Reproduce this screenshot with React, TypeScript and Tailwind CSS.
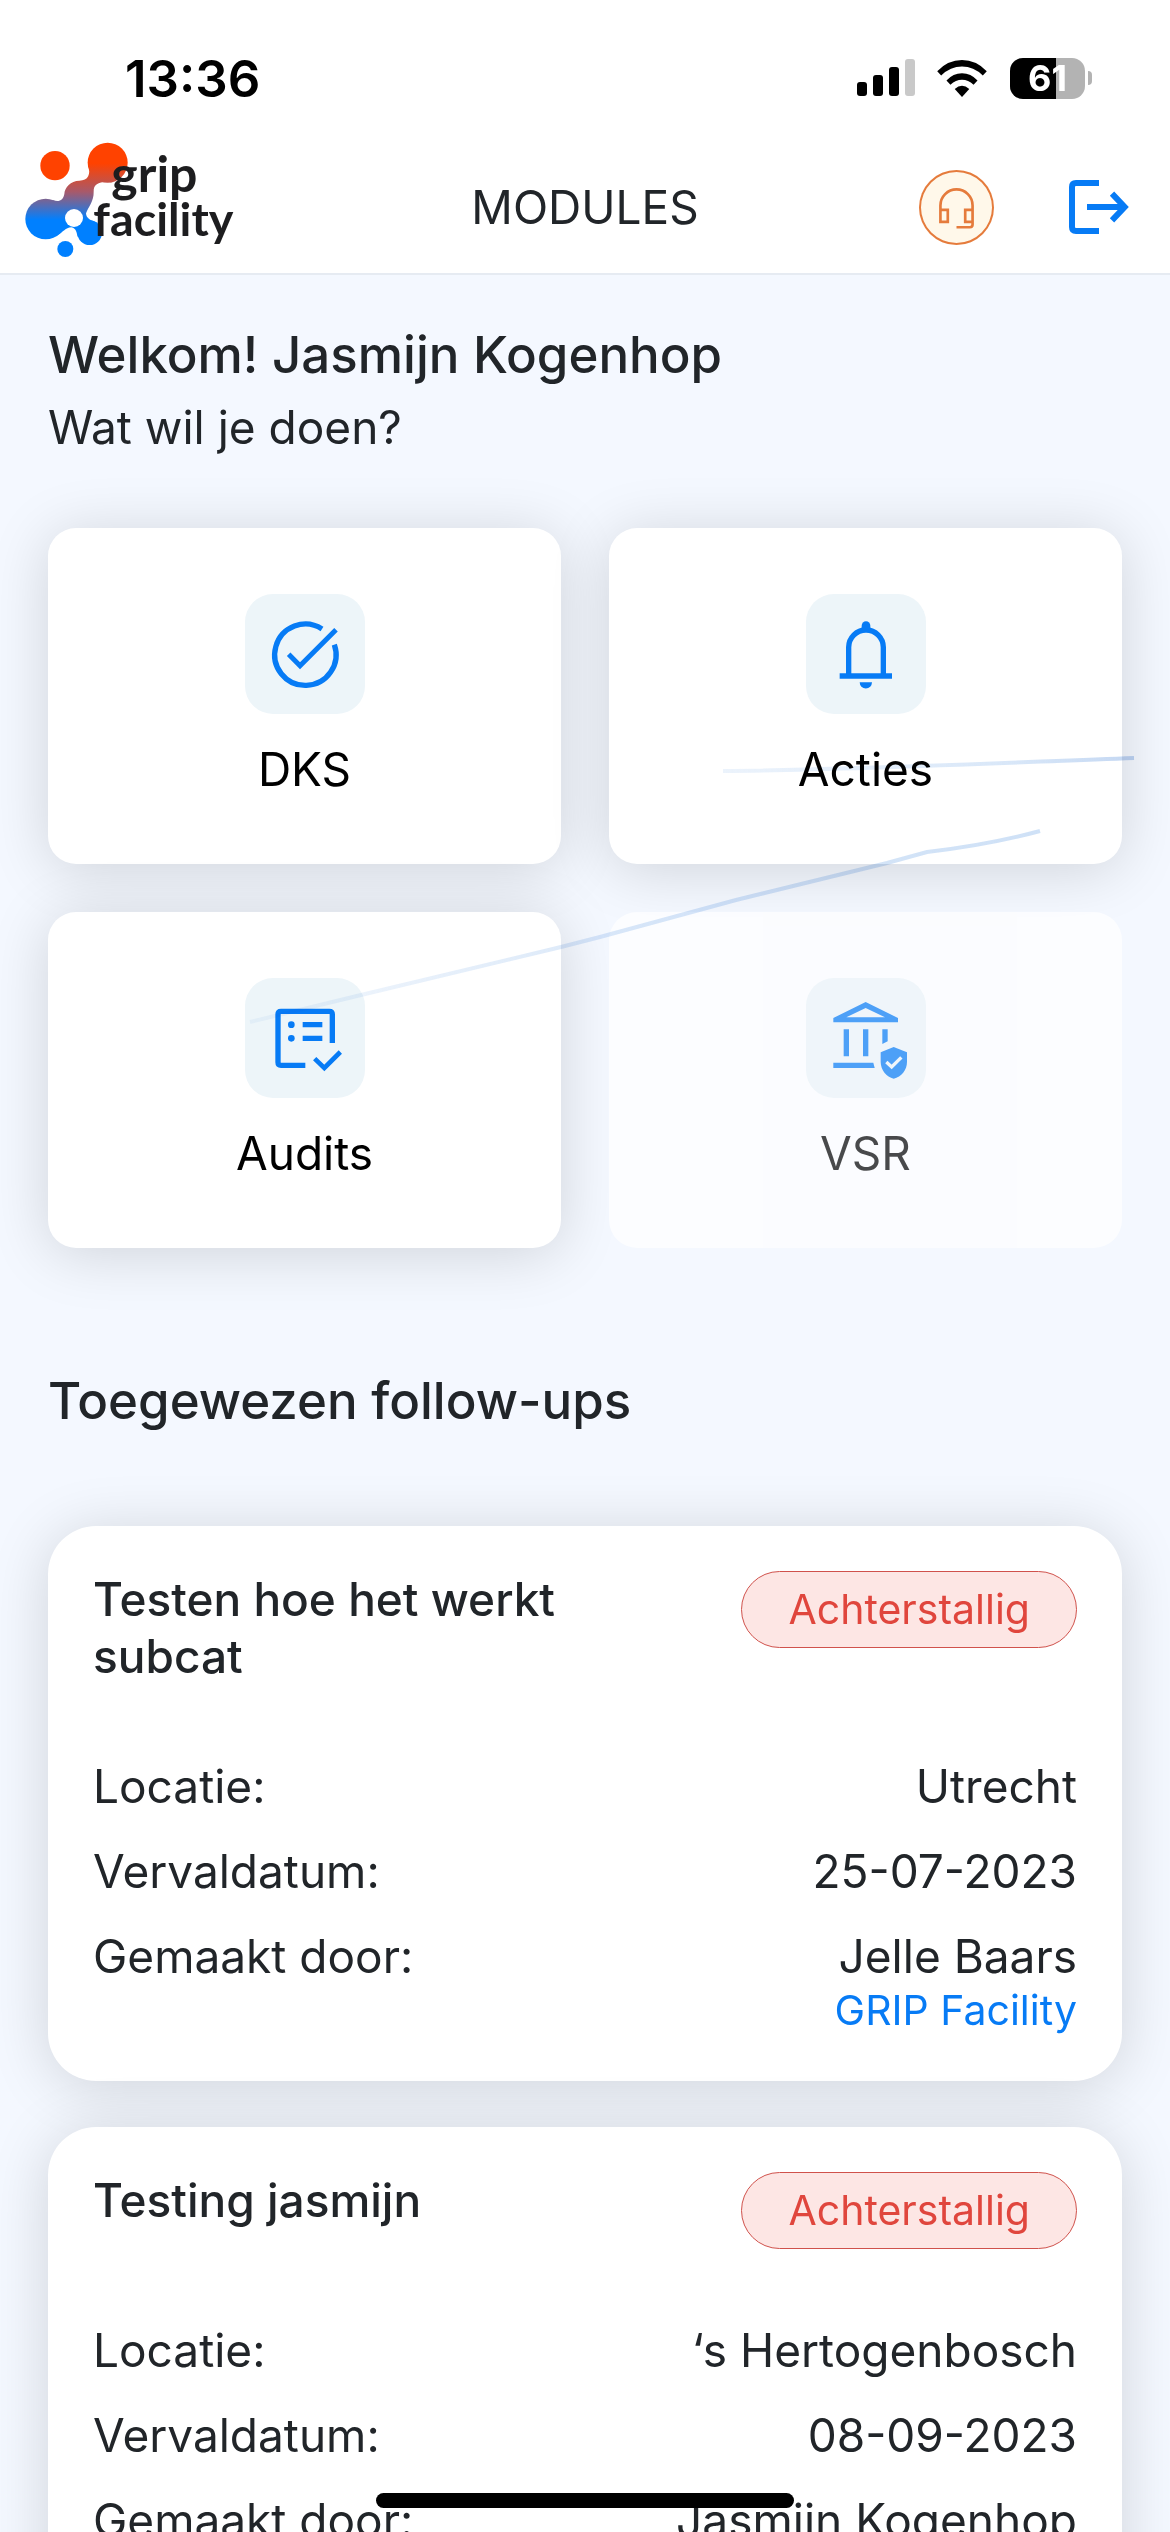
import type { ReactNode } from 'react';
import clsx from 'clsx';

interface Module {
  id: string;
  label: string;
  icon: ReactNode;
  disabled?: boolean;
}

interface FollowUp {
  title: string;
  status: string;
  location: string;
  dueDate: string;
  createdBy: string;
  company: string;
}

const modules: Module[] = [
  { id: 'dks', label: 'DKS', icon: <CheckCircleIcon /> },
  { id: 'acties', label: 'Acties', icon: <BellIcon /> },
  { id: 'audits', label: 'Audits', icon: <AuditIcon /> },
  { id: 'vsr', label: 'VSR', icon: <BankIcon />, disabled: true },
];

const followUps: FollowUp[] = [
  {
    title: 'Testen hoe het werkt subcat',
    status: 'Achterstallig',
    location: 'Utrecht',
    dueDate: '25-07-2023',
    createdBy: 'Jelle Baars',
    company: 'GRIP Facility',
  },
  {
    title: 'Testing jasmijn',
    status: 'Achterstallig',
    location: '‘s Hertogenbosch',
    dueDate: '08-09-2023',
    createdBy: 'Jasmijn Kogenhop',
    company: 'GRIP Facility',
  },
];

function CheckCircleIcon() {
  return (
    <svg viewBox="0 0 360 360" className="size-full" fill="none" stroke="currentColor" aria-hidden="true">
      <path d="M231 105A92 92 0 1 0 268 152" strokeWidth="16" />
      <path d="M131 181L165 215L273 107" strokeWidth="15" />
    </svg>
  );
}

function BellIcon() {
  return (
    <svg viewBox="0 0 360 360" className="size-full" fill="none" stroke="currentColor" aria-hidden="true">
      <path d="M128 246V160A52 52 0 0 1 232 160V246" strokeWidth="16" />
      <path d="M101 246H258" strokeWidth="16" />
      <path d="M167 106V95A13 13 0 0 1 193 95V106Z" fill="currentColor" stroke="none" />
      <path d="M161 265H198A18.500 18.500 0 0 1 161 265Z" fill="currentColor" stroke="none" />
    </svg>
  );
}

function AuditIcon() {
  return (
    <svg viewBox="0 0 360 360" className="size-full" fill="none" stroke="currentColor" aria-hidden="true">
      <path d="M262 195V109Q262 100 253 100H108Q99 100 99 109V253Q99 262 108 262H181" strokeWidth="16" />
      <path d="M173 140H232M173 181H232" strokeWidth="16" />
      <circle cx="139" cy="140" r="10" fill="currentColor" stroke="none" />
      <circle cx="139" cy="181" r="10" fill="currentColor" stroke="none" />
      <path d="M209 242L238 270L286 222" strokeWidth="14" />
    </svg>
  );
}

function BankIcon() {
  return (
    <svg viewBox="0 0 360 360" className="size-full" fill="currentColor" aria-hidden="true">
      <path fillRule="evenodd" d="M179 72L276 120V133H82V120ZM179 90L121 118H237Z" />
      <path d="M113 154H129V235H113ZM171 154H187V235H171ZM229 154H245V190L229 198Z" />
      <path d="M82 254H202L206 270H82Z" />
      <path d="M263 207L303 223V251C303 276 286 296 263 302C241 296 224 276 224 251V223Z" />
      <path d="M241 252L257 267L286 238" fill="none" stroke="#edf5f9" strokeWidth="10" />
    </svg>
  );
}

function HeadsetIcon() {
  return (
    <svg viewBox="294 420 224 224" className="size-full" fill="none" stroke="currentColor" strokeWidth="8" aria-hidden="true">
      <path d="M380 575V539H358V575ZM358 545V526A48 48 0 0 1 454 526V583Q454 591 446 591H406" />
      <path d="M454 539H432V575H454" />
    </svg>
  );
}

function LogoutIcon() {
  return (
    <svg viewBox="744 450 180 162" className="h-[54px] w-[60px]" fill="none" stroke="currentColor" strokeWidth="18" aria-hidden="true">
      <path d="M834 459H765Q753 459 753 471V591Q753 603 765 603H834" />
      <path d="M798 531H910M873 491L911 531L873 571" />
    </svg>
  );
}

function Logo() {
  return (
    <svg viewBox="75 63 639 396" className="h-[132px] w-[213px]" role="img" aria-label="grip facility">
      <defs>
        <linearGradient id="logo-blend" gradientUnits="userSpaceOnUse" x1="0" y1="130" x2="0" y2="300">
          <stop offset="0" stopColor="#ff4200" />
          <stop offset="0.5" stopColor="#a8596a" />
          <stop offset="1" stopColor="#0080ff" />
        </linearGradient>
      </defs>
      <g fill="url(#logo-blend)">
        <circle cx="165" cy="137" r="44" fill="#ff4200" />
        <circle cx="323" cy="128" r="60" />
        <circle cx="137" cy="297" r="61" />
        <circle cx="269" cy="338" r="37" />
        <circle cx="196" cy="387" r="24" />
        <path d="M264 130C274 165 264 182 238 182C212 182 194 202 193 222C190 240 178 247 160 241L120 300L172 346C190 336 196 323 214 322C230 324 230 342 234 352L290 308C275 302 258 296 258 280C264 262 282 244 281 215C280 190 300 184 335 187Z" />
      </g>
      <circle cx="222" cy="294" r="27" fill="#fff" />
      <g fill="#1d1d1f" className="font-['Lato',sans-serif] font-bold">
        <text x="334" y="215" fontSize="150">grip</text>
        <text x="280" y="348" fontSize="140">facility</text>
      </g>
    </svg>
  );
}

function StatusBar() {
  return (
    <div className="flex h-[141px] items-center justify-between bg-white pt-[15px] pr-[78px] pl-[125px]">
      <span className="text-[51px] leading-none font-semibold text-black">13:36</span>
      <div className="flex items-center">
        <svg viewBox="0 0 58 38" className="h-[38px] w-[58px]" aria-hidden="true">
          <rect x="0" y="23" width="10" height="14" rx="3" />
          <rect x="16" y="16" width="10" height="21" rx="3" />
          <rect x="32" y="8" width="10" height="29" rx="3" />
          <rect x="48" y="0" width="10" height="37" rx="3" fill="#c9c9c9" />
        </svg>
        <svg viewBox="0 0 150 112" className="ml-[22px] h-[37px] w-[50px]" aria-hidden="true">
          <path d="M0 34Q32 0 75 0T150 34L138 47Q110 20 75 20T12 47Z" />
          <path d="M28 62Q48 40 75 40T122 62L110 75Q94 60 75 60T40 75Z" />
          <path d="M53 88Q75 68 97 88L75 112Z" />
        </svg>
        <div className="relative ml-[23px] flex h-[41px] w-[75px] items-center justify-center overflow-hidden rounded-[13px] bg-[#b3b3b3]">
          <div className="absolute inset-y-0 left-0 w-[46px] bg-black" />
          <span className="relative text-[36px] leading-none font-bold text-white">61</span>
        </div>
        <div className="ml-[3px] h-[14px] w-1 rounded-r-full bg-[#b3b3b3]" />
      </div>
    </div>
  );
}

function Header() {
  return (
    <header className="grid grid-cols-[1fr_auto_1fr] items-center border-b-2 border-[#e6ebf2] bg-white px-[25px]">
      <Logo />
      <div className="text-[46px] leading-[57px] text-[#212529]">MODULES</div>
      <div className="flex items-center justify-end gap-[75px] pr-4">
        <button
          type="button"
          aria-label="Helpdesk"
          className="size-[75px] rounded-full bg-[#fff8ea] text-[#e57b3c] ring-2 ring-[#e57b3c] ring-inset"
        >
          <HeadsetIcon />
        </button>
        <button type="button" aria-label="Uitloggen" className="text-[#077bf5]">
          <LogoutIcon />
        </button>
      </div>
    </header>
  );
}

function ModuleCard({ label, icon, disabled = false }: Omit<Module, 'id'>) {
  return (
    <button
      type="button"
      disabled={disabled}
      className={clsx(
        'flex flex-col items-center gap-[27px] rounded-[28px] bg-white py-[66px] text-black',
        disabled ? 'opacity-70' : 'shadow-[0_6px_60px_rgba(0,0,0,0.15)]',
      )}
    >
      <span className="size-[120px] rounded-[28px] bg-[#edf5f9] text-[#077bf5]">{icon}</span>
      <span className="text-[46px] leading-[57px]">{label}</span>
    </button>
  );
}

/* Two loose pen strokes drawn over the tiles */
function PenStrokes() {
  return (
    <svg
      viewBox="0 0 1074 720"
      className="pointer-events-none absolute inset-0 size-full overflow-visible mix-blend-multiply"
      fill="none"
      strokeWidth="4"
      aria-hidden="true"
    >
      <defs>
        <linearGradient id="pen-top" gradientUnits="userSpaceOnUse" x1="675" y1="0" x2="1086" y2="0">
          <stop offset="0" stopColor="#9fc3ee" stopOpacity="0.2" />
          <stop offset="0.7" stopColor="#9fc3ee" stopOpacity="0.4" />
          <stop offset="1" stopColor="#9dbdea" stopOpacity="0.6" />
        </linearGradient>
        <linearGradient id="pen-bottom" gradientUnits="userSpaceOnUse" x1="202" y1="0" x2="992" y2="0">
          <stop offset="0" stopColor="#9fc3ee" stopOpacity="0.12" />
          <stop offset="0.5" stopColor="#9fc3ee" stopOpacity="0.4" />
          <stop offset="1" stopColor="#9fc3ee" stopOpacity="0.5" />
        </linearGradient>
      </defs>
      <path d="M675 243C800 242 950 235 1086 230" stroke="url(#pen-top)" />
      <path d="M202 494L313 467L513 419L552 409L688 372L839 335L879 324Q940 317 992 303" stroke="url(#pen-bottom)" />
    </svg>
  );
}

function DetailRow({ label, children }: { label: string; children: ReactNode }) {
  return (
    <div className="flex justify-between">
      <dt>{label}</dt>
      <dd className="text-right">{children}</dd>
    </div>
  );
}

function FollowUpCard({ item }: { item: FollowUp }) {
  return (
    <article className="rounded-[48px] bg-white p-[45px] text-[46px] leading-[57px] text-[#212529] shadow-[0_6px_60px_rgba(0,0,0,0.15)]">
      <div className="flex items-start justify-between">
        <h3 className="w-1/2 font-medium">{item.title}</h3>
        <span className="rounded-full border border-[#d0524c] bg-[#fde6e4] px-[46px] py-3 text-[41px] leading-[51px] text-[#e0463d]">
          {item.status}
        </span>
      </div>
      <dl className="mt-[73px] flex flex-col gap-7">
        <DetailRow label="Locatie:">{item.location}</DetailRow>
        <DetailRow label="Vervaldatum:">{item.dueDate}</DetailRow>
        <DetailRow label="Gemaakt door:">
          {item.createdBy}
          <a href="#bedrijf" className="block text-[41px] leading-[51px] text-[#077bf5]">
            {item.company}
          </a>
        </DetailRow>
      </dl>
    </article>
  );
}

export default function App() {
  return (
    <div className="flex h-screen flex-col overflow-hidden bg-[#f4f8ff] font-['Inter',sans-serif]">
      <StatusBar />
      <Header />
      <main className="min-h-0 flex-1 overflow-y-auto px-12 py-12 text-[#212529] [scrollbar-width:none]">
        <h1 className="text-[51px] leading-[64px] font-medium">Welkom! Jasmijn Kogenhop</h1>
        <p className="mt-3 text-[46px] leading-[57px]">Wat wil je doen?</p>

        <div className="relative mt-[72px]">
          <div className="grid grid-cols-2 gap-12">
            {modules.map(({ id, ...rest }) => (
              <ModuleCard key={id} {...rest} />
            ))}
          </div>
          <PenStrokes />
        </div>

        <h2 className="mt-[121px] text-[51px] leading-[64px] font-medium">Toegewezen follow-ups</h2>
        <div className="mt-[93px] flex flex-col gap-[46px]">
          {followUps.map((item) => (
            <FollowUpCard key={item.title} item={item} />
          ))}
        </div>
      </main>

      {/* Home indicator */}
      <div className="fixed bottom-6 left-1/2 h-[15px] w-[418px] -translate-x-1/2 rounded-full bg-black" />
    </div>
  );
}
